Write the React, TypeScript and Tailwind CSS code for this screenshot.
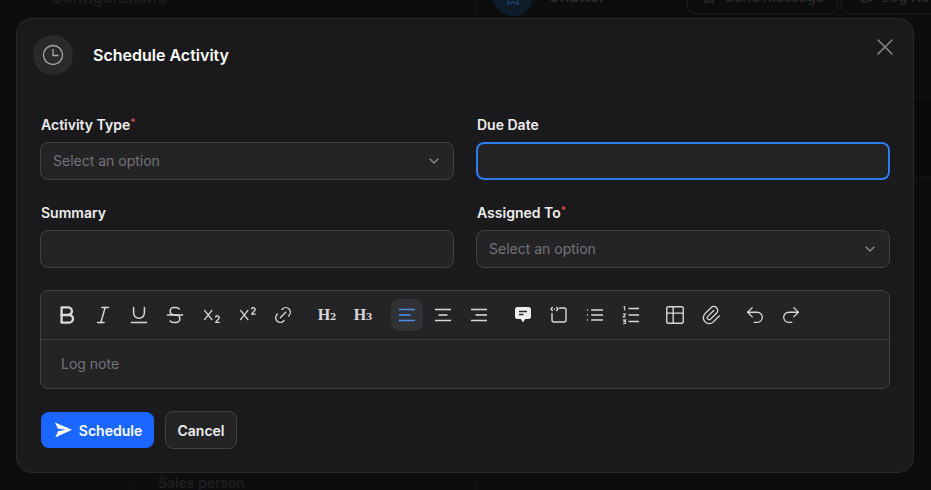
import React from "react";
import {
  TbBold, TbItalic, TbUnderline, TbStrikethrough, TbSubscript, TbSuperscript, TbLink,
  TbTable, TbPaperclip, TbX, TbChevronDown, TbStar, TbMessage,
} from "react-icons/tb";
import { LuList, LuUndo2, LuRedo2 } from "react-icons/lu";

const Btn = ({ children, active }: { children: React.ReactNode; active?: boolean }) => (
  <div className={`flex h-8 w-8 items-center justify-center rounded-lg ${active ? "bg-[#323236] text-[#4a90e8]" : "text-[#d8d8da]"}`}>
    {children}
  </div>
);

const Heading = ({ n }: { n: string }) => (
  <span className="font-['Liberation_Serif',serif] text-[16px] leading-none font-bold text-[#d8d8da]">
    H<span className="font-['DejaVu_Serif',serif] text-[9px] font-bold">{n}</span>
  </span>
);

const Align = ({ kind }: { kind: "left" | "center" | "right" }) => {
  const mid = kind === "left" ? "M1 9h11.500" : kind === "center" ? "M4.500 9h9" : "M5.500 9h11.500";
  return (
    <svg width="18" height="18" viewBox="0 0 18 18" fill="none" stroke="currentColor" strokeWidth="1.600">
      <path d="M1 3.500h16M1 14.500h16" />
      <path d={mid} />
    </svg>
  );
};

const Comment = () => (
  <svg width="18" height="18" viewBox="0 0 18 18">
    <path d="M3.500 1h11A2.500 2.500 0 0 1 17 3.500v7a2.500 2.500 0 0 1-2.500 2.500h-3.300L9 16.500 6.800 13H3.500A2.500 2.500 0 0 1 1 10.500v-7A2.500 2.500 0 0 1 3.500 1z" fill="#eeeeef" />
    <path d="M5 5.500h8M5 8.500h4.500" stroke="#262628" strokeWidth="1.500" />
  </svg>
);

const CodeBox = () => (
  <svg width="18" height="18" viewBox="0 0 18 18" fill="none" stroke="#d8d8da" strokeWidth="1.400" strokeLinecap="round" strokeLinejoin="round">
    <path d="M9.500 2h4.500a2 2 0 0 1 2 2v10a2 2 0 0 1-2 2H4a2 2 0 0 1-2-2V7.500" />
    <path d="M2.300 1.500L1 3l1.300 1.500M6.700 1.500L8 3 6.700 4.500M4.500 3h0.100" />
  </svg>
);

const Ordered = () => (
  <svg width="18" height="18" viewBox="0 0 18 18" fill="none" stroke="#d8d8da" strokeWidth="1.400">
    <path d="M6.500 2.500H17M6.500 9H17M6.500 15.500H17" />
    <path d="M1.500 1.200L2.700 0.700V4.500M1 8h2.500L1.200 11h2.500M1 14h2.500L2 15.500h1.500V17.500H1" strokeWidth="1.100" />
  </svg>
);

const Send = () => (
  <svg width="17" height="16" viewBox="0 0 17 16" fill="#ffffff" className="shrink-0">
    <path d="M0 0.500L17 7.800 0.300 15.500 3 9.200 10.500 7.800 2.800 6.400z" />
  </svg>
);

const Clock = () => (
  <svg width="22" height="22" viewBox="0 0 22 22" fill="none" stroke="#a8a8ac" strokeWidth="1.300" strokeLinecap="round" strokeLinejoin="round">
    <circle cx="11" cy="11" r="9.500" />
    <path d="M11 5.500V11.500H16" />
  </svg>
);

const labelCls = "mb-[7px] block pl-px text-[14px] leading-[20px] font-semibold text-[#eeeeef]";
const fieldCls = "flex h-[38px] items-center justify-between rounded-lg border border-[#424245] bg-[#242426] px-3 text-[14px] text-[#737378]";

const Req = () => <span className="relative top-[-4px] text-[10px] leading-none text-[#e5484d]">*</span>;

const SelectField = () => (
  <div className={fieldCls}>
    <span className="relative top-[-1px]">Select an option</span>
    <TbChevronDown size={16} className="-mr-px text-[#8a8a8e]" />
  </div>
);

export default function App() {
  const big = { size: 26, strokeWidth: 1.400 };
  const mid = { size: 22, strokeWidth: 1.500 };
  return (
    <div className="relative flex h-[490px] w-[931px] items-start overflow-hidden bg-[#0c0d0f] pt-[18px] pl-[16px] font-['Inter',sans-serif]">
      {/* dimmed page behind the dialog */}
      <div className="absolute top-0 left-[475px] h-[490px] w-px bg-[#111214]" />
      <div className="absolute top-[465px] left-[134px] h-[25px] w-px bg-[#101113]" />
      <div className="absolute top-[97px] left-[914px] h-[80px] w-[17px] border-y border-[#131416] bg-[#090a0b]" />
      <div className="absolute top-[-15px] left-[51px] text-[16px] font-semibold text-[#1c1d1f]">Configurations</div>
      <div className="absolute top-[-24px] left-[493px] flex h-10 w-10 items-center justify-center rounded-full bg-[#0f1c2a]">
        <TbStar size={20} className="relative top-[1px] text-[#1c3d63]" />
      </div>
      <div className="absolute top-[-16px] left-[548px] text-[16px] font-semibold text-[#2a2b2d]">Chatter</div>
      <div className="absolute top-[-21px] left-[687px] flex h-[35px] w-[151px] items-center justify-center gap-2 rounded-lg border border-[#1d1e20] text-[14px] font-medium text-[#2a2b2d]">
        <TbStar size={16} />
        Send Message
      </div>
      <div className="absolute top-[-21px] left-[841px] flex h-[35px] w-[120px] items-center gap-2 rounded-lg border border-[#1d1e20] pl-4 text-[14px] font-medium text-[#2a2b2d]">
        <TbMessage size={16} />
        Log Note
      </div>
      <div className="absolute top-[472px] left-[158px] text-[14px] leading-[22px] font-medium text-[#1f2022]">Sales person</div>

      <div className="relative h-[455px] w-[898px] rounded-2xl border border-[#2a2a2c] bg-[#1a1a1c]">
        <div className="flex items-center gap-5 px-4 pt-4">
          <div className="flex h-10 w-10 items-center justify-center rounded-full bg-[#2a2a2d]">
            <Clock />
          </div>
          <h2 className="text-[16px] font-semibold text-white">Schedule Activity</h2>
        </div>
        <button className="absolute top-[14px] right-[14px] text-[#8a8a8e]" aria-label="Close">
          <TbX size={28} strokeWidth={1.250} />
        </button>

        <div className="px-[23px] pt-[40px]">
          <div className="grid grid-cols-[414px_414px] gap-x-[22px] gap-y-[23px]">
            <div>
              <label className={labelCls}>Activity Type<Req /></label>
              <SelectField />
            </div>
            <div>
              <label className={labelCls}>Due Date</label>
              <div className="h-[38px] rounded-lg border-2 border-[#2f7bf0] bg-[#242426]" />
            </div>
            <div>
              <label className={labelCls}>Summary</label>
              <div className={fieldCls} />
            </div>
            <div>
              <label className={labelCls}>Assigned To<Req /></label>
              <SelectField />
            </div>
          </div>

          <div className="mt-[22px] w-[850px] rounded-lg border border-[#424245] bg-[#242426]">
            <div className="flex h-[49px] items-center gap-3 border-b border-[#3a3a3d] px-[10px]">
              <div className="flex gap-1">
                <Btn><TbBold size={26} strokeWidth={2.200} /></Btn>
                <Btn><TbItalic {...big} /></Btn>
                <Btn><TbUnderline {...big} /></Btn>
                <Btn><TbStrikethrough {...big} /></Btn>
                <Btn><TbSubscript {...mid} /></Btn>
                <Btn><TbSuperscript {...mid} /></Btn>
                <Btn><TbLink {...mid} /></Btn>
              </div>
              <div className="flex gap-1">
                <Btn><Heading n="2" /></Btn>
                <Btn><Heading n="3" /></Btn>
              </div>
              <div className="flex gap-1">
                <Btn active><Align kind="left" /></Btn>
                <Btn><Align kind="center" /></Btn>
                <Btn><Align kind="right" /></Btn>
              </div>
              <div className="flex gap-1">
                <Btn><Comment /></Btn>
                <Btn><CodeBox /></Btn>
                <Btn><LuList size={20} strokeWidth={1.700} /></Btn>
                <Btn><Ordered /></Btn>
              </div>
              <div className="flex gap-1">
                <Btn><TbTable {...mid} /></Btn>
                <Btn><TbPaperclip {...mid} /></Btn>
              </div>
              <div className="flex gap-1">
                <Btn><LuUndo2 size={22} strokeWidth={1.400} /></Btn>
                <Btn><LuRedo2 size={22} strokeWidth={1.400} /></Btn>
              </div>
            </div>
            <div className="flex h-[48px] items-center px-5 pb-[2px] text-[14px] text-[#737378]">Log note</div>
          </div>

          <div className="mt-[22px] flex items-center gap-[11px] pl-px">
            <button className="flex h-9 w-[113px] items-center justify-center gap-[7px] rounded-lg bg-[#1a66ff] pl-[2px] text-[14px] font-semibold text-white">
              <Send />
              Schedule
            </button>
            <button className="flex h-[38px] w-[72px] items-center justify-center rounded-lg border border-[#424245] bg-[#242426] text-[14px] font-semibold text-[#eeeeef]">
              Cancel
            </button>
          </div>
        </div>
      </div>
    </div>
  );
}
